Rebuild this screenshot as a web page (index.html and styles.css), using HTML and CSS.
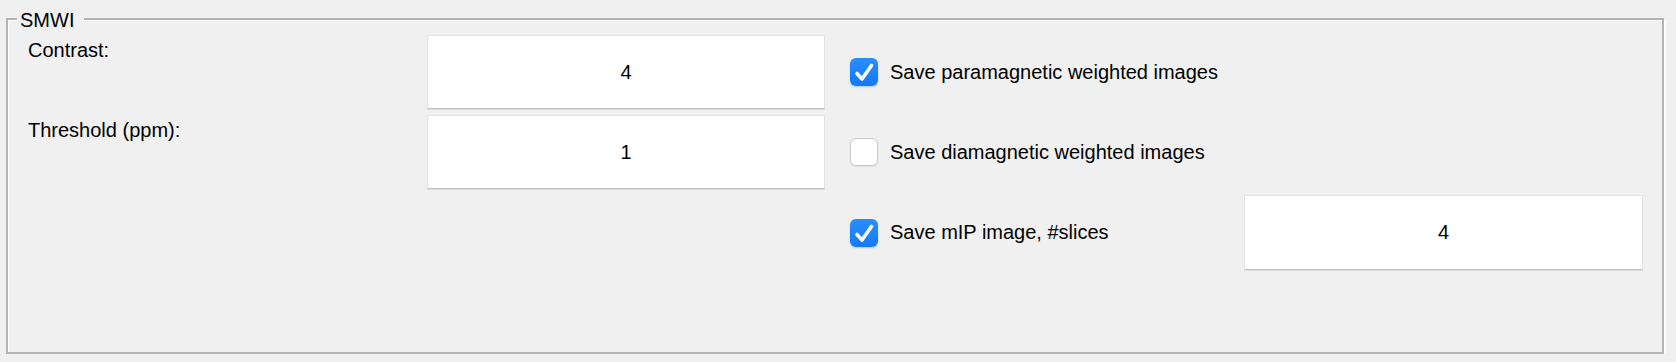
FILE: index.html
```html
<!DOCTYPE html>
<html lang="en">
<head>
    <meta charset="UTF-8">
    <title>SMWI</title>
    <link rel="stylesheet" href="styles.css">
</head>
<body>
    <div class="group">
        <span class="group-title">SMWI</span>
        <div class="grid">
            <label class="field-label">Contrast:</label>
            <input class="num" type="text" value="4">
            <label class="check">
                <span class="box on">
                    <svg viewBox="0 0 28 28" width="28" height="28"><polyline points="7,15.5 12,21 21.5,7.5" fill="none" stroke="#fff" stroke-width="3.6" stroke-linecap="round" stroke-linejoin="round"/></svg>
                </span>
                Save paramagnetic weighted images
            </label>
            <div></div>

            <label class="field-label">Threshold (ppm):</label>
            <input class="num" type="text" value="1">
            <label class="check">
                <span class="box"></span>
                Save diamagnetic weighted images
            </label>
            <div></div>

            <div></div>
            <div></div>
            <label class="check">
                <span class="box on">
                    <svg viewBox="0 0 28 28" width="28" height="28"><polyline points="7,15.5 12,21 21.5,7.5" fill="none" stroke="#fff" stroke-width="3.6" stroke-linecap="round" stroke-linejoin="round"/></svg>
                </span>
                Save mIP image, #slices
            </label>
            <input class="num" type="text" value="4">
        </div>
    </div>
</body>
</html>
```

FILE: styles.css
```css
body {
    margin: 0;
    background-color: #f0f0f0;
    font-family: "Liberation Sans", Arial, sans-serif;
    font-size: 20px;
    line-height: 23px;
    color: #000;
}
.group {
    position: relative;
    box-sizing: border-box;
    width: 1658px;
    height: 336px;
    margin: 18px 0 0 6px;
    padding: 15px 0 0 20px;
    border: 2px solid #b3b3b3;
    box-shadow: 2px 2px 0 #fff, inset 1px 1px 0 #fff;
}
.group-title {
    position: absolute;
    top: -11px;
    left: 9px;
    padding: 0 10px 0 3px;
    background-color: #f0f0f0;
}
.grid {
    display: grid;
    grid-template-columns: 399px 398px 419px 399px;
    grid-template-rows: 74px 74px 75px;
    row-gap: 6px;
}
.field-label {
    padding-top: 4px;
}
.num {
    box-sizing: border-box;
    width: 100%;
    height: 100%;
    margin: 0;
    padding: 0;
    border: 1px solid #e3e3e3;
    border-bottom-color: #c2c2c2;
    box-shadow: 0 1px 0 #dcdcdc;
    background: #fff;
    font-family: inherit;
    font-size: 20px;
    color: #000;
    text-align: center;
    outline: none;
}
.check {
    display: flex;
    align-items: center;
    gap: 12px;
    padding-left: 25px;
}
.box {
    box-sizing: border-box;
    width: 28px;
    height: 28px;
    border-radius: 6px;
    border: 1px solid #c9c9c9;
    background: #fff;
    box-shadow: 0 1px 1px rgba(0, 0, 0, 0.06);
}
.box.on {
    border: none;
    background: linear-gradient(#2a8dff, #1479f5);
    box-shadow: 0 1px 2px rgba(0, 80, 200, 0.25);
}
.box svg {
    display: block;
}
```
